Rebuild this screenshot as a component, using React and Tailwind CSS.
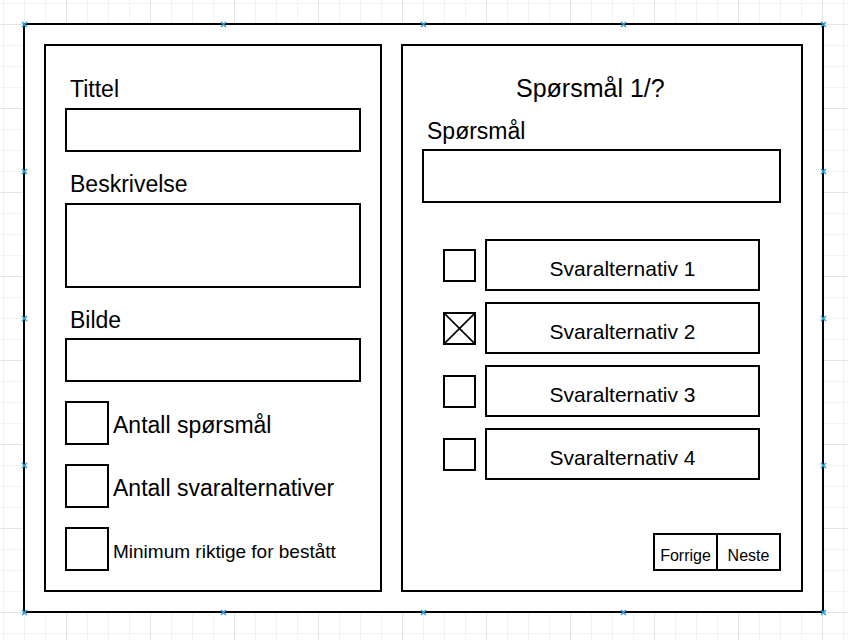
import React from 'react';

const font = "font-['Liberation_Sans',Arial,sans-serif]";

function Marker({ x, y }) {
  return (
    <svg
      className="absolute w-[7px] h-[7px]"
      style={{ left: x - 3.5, top: y - 3.5 }}
      viewBox="0 0 7 7"
    >
      <path d="M1 1L6 6M6 1L1 6" stroke="#29a3e6" strokeWidth="1.5" />
    </svg>
  );
}

function Field({ label, height, first }) {
  return (
    <div className={first ? '' : 'mt-[21px]'}>
      <div className="pl-[5px] text-[23px] leading-none text-black">{label}</div>
      <div className="mt-[7px] w-[296px] border-2 border-black bg-white" style={{ height }} />
    </div>
  );
}

function Setting({ label, small }) {
  return (
    <div className="flex items-start">
      <div className="w-[44px] h-[44px] border-2 border-black shrink-0" />
      <span
        className={
          small
            ? 'ml-[4px] mt-[15px] text-[19px] leading-none whitespace-nowrap'
            : 'ml-[4px] mt-[13px] text-[23px] leading-none whitespace-nowrap'
        }
      >
        {label}
      </span>
    </div>
  );
}

function Answer({ n, checked }) {
  return (
    <div className="flex items-center">
      <div className="w-[33px] h-[33px] border-2 border-black shrink-0 relative">
        {checked && (
          <svg className="absolute inset-0 w-full h-full" viewBox="0 0 29 29">
            <path d="M0 0L29 29M29 0L0 29" stroke="black" strokeWidth="1.6" />
          </svg>
        )}
      </div>
      <div className="ml-[9px] w-[275px] h-[52px] border-2 border-black flex items-center justify-center pt-[6px] text-[21px] leading-none">
        Svaralternativ {n}
      </div>
    </div>
  );
}

export default function App() {
  const xs = [24, 223.75, 423.5, 623.25, 823];
  const ys = [24, 171, 318, 465, 612];
  const markers = [];
  xs.forEach((x) => {
    markers.push([x, 24]);
    markers.push([x, 612]);
  });
  ys.slice(1, 4).forEach((y) => {
    markers.push([24, y]);
    markers.push([823, y]);
  });

  return (
    <div
      className={`relative w-[848px] h-[640px] overflow-hidden bg-white text-black ${font} bg-[linear-gradient(to_right,#e4e4e4_1px,transparent_1px),linear-gradient(to_bottom,#e4e4e4_1px,transparent_1px),linear-gradient(to_right,#f2f2f2_1px,transparent_1px),linear-gradient(to_bottom,#f2f2f2_1px,transparent_1px)] bg-[length:84px_84px,84px_84px,21px_21px,21px_21px] bg-[position:66px_24px,66px_24px,3px_3px,3px_3px]`}
    >
      <div className="absolute left-[23px] top-[23px] w-[801px] h-[590px] border-2 border-black bg-white p-[19px] flex gap-[19px]">
        {/* venstre: quiz-info */}
        <div className="w-[338px] h-full border-2 border-black flex flex-col px-[19px] pt-[32px]">
          <Field label="Tittel" height={44} first />
          <Field label="Beskrivelse" height={85} />
          <div className="mt-[21px]">
            <div className="pl-[5px] text-[23px] leading-none">Bilde</div>
            <div className="mt-[6px] w-[296px] h-[44px] border-2 border-black" />
          </div>
          <div className="mt-[19px] flex flex-col gap-[19px]">
            <Setting label="Antall spørsmål" />
            <Setting label="Antall svaralternativer" />
            <Setting label="Minimum riktige for bestått" small />
          </div>
        </div>

        {/* høyre: spørsmål */}
        <div className="w-[402px] h-full border-2 border-black flex flex-col pt-[30px]">
          <div className="pl-[113px] text-[25px] leading-none whitespace-nowrap">Spørsmål 1/?</div>
          <div className="mt-[19px] pl-[24px] text-[23px] leading-none">Spørsmål</div>
          <div className="mt-[6px] ml-[19px] w-[359px] h-[54px] border-2 border-black" />
          <div className="mt-[36px] pl-[40px] flex flex-col gap-[11px]">
            <Answer n={1} />
            <Answer n={2} checked />
            <Answer n={3} />
            <Answer n={4} />
          </div>
          <div className="mt-[53px] ml-[250px] w-[128px] h-[38px] border-2 border-black flex text-[16px] leading-none">
            <div className="w-[61px] flex items-center justify-center pt-[7px]">Forrige</div>
            <div className="flex-1 border-l-2 border-black flex items-center justify-center pt-[7px]">Neste</div>
          </div>
        </div>
      </div>

      {markers.map(([x, y], i) => (
        <Marker key={i} x={x} y={y} />
      ))}
    </div>
  );
}
